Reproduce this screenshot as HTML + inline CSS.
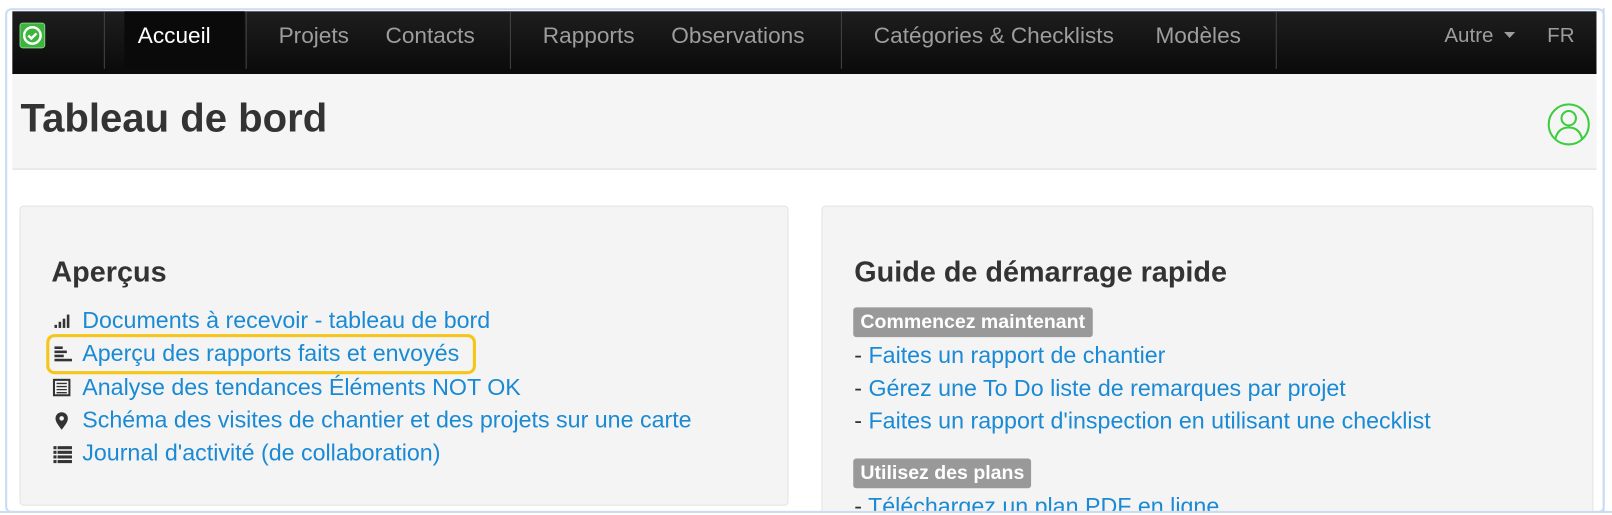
<!DOCTYPE html><html><head><meta charset="utf-8"><style>
*{box-sizing:border-box;margin:0;padding:0}
html,body{width:1612px;height:515px;overflow:hidden}
body{background:#fff;font-family:"Liberation Sans",sans-serif;position:relative}
.wrap{position:absolute;left:0;top:0;width:1568px;height:501px;overflow:hidden;transform:scale(1.028);transform-origin:0 0}
.frame{position:absolute;left:5px;top:8px;width:1556px;height:491px;border:2px solid #c9dcf3;border-radius:6px;overflow:hidden;background:#fff}
.nav{position:absolute;left:12px;top:11px;width:1541px;height:61px;background:linear-gradient(#1e1e1e,#0a0a0a)}
.nav span{position:absolute;top:0;line-height:48px;font-size:22px;color:#9d9d9d;white-space:nowrap}
.sep{position:absolute;top:0;width:1px;height:56px;background:#444}
.hdr{position:absolute;left:12px;top:72px;width:1541px;height:93px;background:#f5f5f5;border-bottom:1px solid #ddd}
.panel{position:absolute;top:200px;background:#f4f4f4;border:1px solid #e3e3e3;border-radius:4px}
h3{position:absolute;font-size:28px;font-weight:bold;color:#333;white-space:nowrap}
.l{position:absolute;font-size:22.6px;line-height:26px;color:#1a8ad4;white-space:nowrap}
.l b{font-weight:normal;color:#333}
.lab{position:absolute;background:#999;color:#fff;font-weight:bold;font-size:19px;border-radius:3px;padding:0 7px;line-height:29px;white-space:nowrap}
.ic{position:absolute;left:50px}
</style></head><body><div class="wrap">
<div class="frame"></div>
<div class="nav">
<div style="position:absolute;left:7px;top:11px;width:25px;height:25px;background:#3cb53c;border-radius:3px;border:1px solid #8c8"><svg width="23" height="23" viewBox="0 0 23 23"><circle cx="11.5" cy="11.5" r="8" fill="none" stroke="#fff" stroke-width="2.4"/><path d="M7.5 11.5l3 3 5-5" fill="none" stroke="#fff" stroke-width="2.4"/></svg></div>
<div class="sep" style="left:89px"></div>
<div style="position:absolute;left:109px;top:0;width:117px;height:56px;background:#0a0a0a"></div>
<span style="left:122px;color:#fff">Accueil</span>
<div class="sep" style="left:227px"></div>
<span style="left:259px">Projets</span><span style="left:363px">Contacts</span>
<div class="sep" style="left:484px"></div>
<span style="left:516px">Rapports</span><span style="left:641px">Observations</span>
<div class="sep" style="left:806px"></div>
<span style="left:838px">Catégories &amp; Checklists</span><span style="left:1112px">Modèles</span>
<div class="sep" style="left:1229px"></div>
<span style="left:1393px;font-size:20px">Autre</span>
<svg style="position:absolute;left:1451px;top:20px" width="11" height="7"><path d="M0 0h11L5.5 6z" fill="#9d9d9d"/></svg>
<span style="left:1493px;font-size:20px">FR</span>
</div>
<div class="hdr">
<div style="position:absolute;left:8px;top:22px;font-size:39px;font-weight:bold;color:#333">Tableau de bord</div>
<svg style="position:absolute;left:1493px;top:28px" width="42" height="42" viewBox="0 0 42 42"><circle cx="21" cy="21" r="19.5" fill="none" stroke="#3dcc3d" stroke-width="2"/><circle cx="21" cy="15" r="7" fill="none" stroke="#3dcc3d" stroke-width="2"/><path d="M8 35c2-8 7-11 13-11s11 3 13 11" fill="none" stroke="#3dcc3d" stroke-width="2"/></svg>
</div>
<div class="panel" style="left:19px;width:748px;height:292px"></div>
<div class="panel" style="left:799px;width:751px;height:320px"></div>
<h3 style="left:50px;top:249px">Aperçus</h3>
<svg class="ic" style="top:302px" width="22" height="20"><rect x="3" y="14" width="2.5" height="3" fill="#333"/><rect x="7" y="11" width="2.5" height="6" fill="#333"/><rect x="11" y="8" width="2.5" height="9" fill="#333"/><rect x="15" y="4" width="2.5" height="13" fill="#333"/></svg>
<span class="l" style="left:80px;top:299px">Documents à recevoir - tableau de bord</span>
<div style="position:absolute;left:45px;top:325px;width:418px;height:39px;border:3px solid #f5c518;border-radius:8px"></div>
<svg class="ic" style="top:335px" width="22" height="20"><rect x="3" y="2" width="8" height="2.5" fill="#333"/><rect x="3" y="6" width="12" height="2.5" fill="#333"/><rect x="3" y="10" width="9" height="2.5" fill="#333"/><rect x="3" y="14" width="17" height="2.5" fill="#333"/></svg>
<span class="l" style="left:80px;top:331px">Aperçu des rapports faits et envoyés</span>
<svg class="ic" style="top:367px" width="22" height="20"><rect x="2.5" y="2.5" width="15" height="15" fill="none" stroke="#333" stroke-width="2"/><path d="M5 6h10M5 9h10M5 12h10M5 15h10" stroke="#333" stroke-width="1.3"/></svg>
<span class="l" style="left:80px;top:364px">Analyse des tendances Éléments NOT OK</span>
<svg class="ic" style="top:399px" width="22" height="22"><path d="M10 19c-4-5-6-8-6-11a6 6 0 0112 0c0 3-2 6-6 11z" fill="#333"/><circle cx="10" cy="8" r="2.2" fill="#f4f4f4"/></svg>
<span class="l" style="left:80px;top:396px">Schéma des visites de chantier et des projets sur une carte</span>
<svg class="ic" style="top:432px" width="22" height="20"><g fill="#333"><rect x="2" y="2" width="3" height="3"/><rect x="6" y="2" width="14" height="3"/><rect x="2" y="6.5" width="3" height="3"/><rect x="6" y="6.5" width="14" height="3"/><rect x="2" y="11" width="3" height="3"/><rect x="6" y="11" width="14" height="3"/><rect x="2" y="15.5" width="3" height="3"/><rect x="6" y="15.5" width="14" height="3"/></g></svg>
<span class="l" style="left:80px;top:428px">Journal d'activité (de collaboration)</span>
<h3 style="left:831px;top:249px">Guide de démarrage rapide</h3>
<div class="lab" style="left:830px;top:299px">Commencez maintenant</div>
<span class="l" style="left:831px;top:333px"><b>- </b>Faites un rapport de chantier</span>
<span class="l" style="left:831px;top:365px"><b>- </b>Gérez une To Do liste de remarques par projet</span>
<span class="l" style="left:831px;top:397px"><b>- </b>Faites un rapport d'inspection en utilisant une checklist</span>
<div class="lab" style="left:830px;top:446px">Utilisez des plans</div>
<span class="l" style="left:831px;top:480px"><b>- </b>Téléchargez un plan PDF en ligne</span>
<div style="position:absolute;z-index:10;left:0;top:497px;width:1612px;height:4px;background:#fff;border-top:2px solid #c9dcf3"></div>
<div style="position:absolute;z-index:11;left:1559px;top:8px;width:2px;height:491px;background:#c9dcf3"></div>
</div></body></html>
